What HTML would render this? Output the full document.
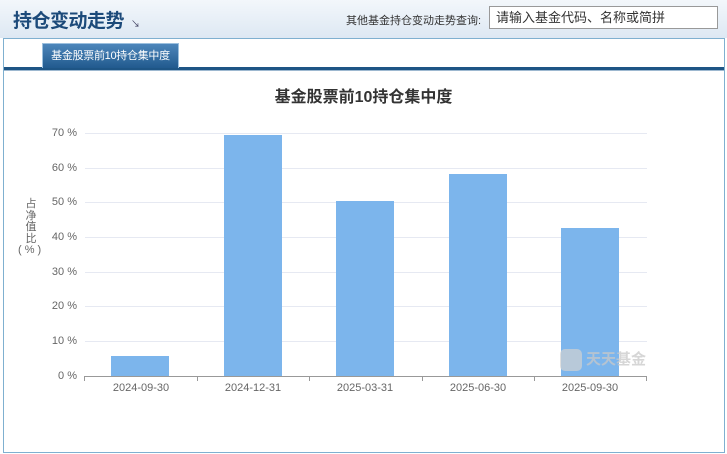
<!DOCTYPE html>
<html><head><meta charset="utf-8"><style>
body{margin:0;width:727px;height:454px;position:relative;background:#fff;font-family:"Liberation Sans","Noto Sans CJK SC",sans-serif;overflow:hidden}
.hdr{position:absolute;left:0;top:0;width:727px;height:38px;background:linear-gradient(#f3f7fb,#dde8f3)}
.t{position:absolute;left:13px;top:6px;font-size:19px;font-weight:bold;color:#1c4a7a;letter-spacing:-0.5px}
.ar{position:absolute;left:131px;top:17px;font-size:9px;color:#335}
.q{position:absolute;left:346px;top:12px;font-size:11px;color:#333}
.in{position:absolute;left:489px;top:6px;width:229px;height:23px;border:1px solid #999;background:#fff;box-sizing:border-box;font-size:13px;color:#333;padding:3px 6px;line-height:16px}
.panel{position:absolute;left:3px;top:38px;width:720px;height:413px;border:1px solid #7fb0d0;background:#fff}
.tab{position:absolute;left:42px;top:43px;width:137px;height:25px;background:linear-gradient(#4d86bb,#215a8e);border:1px solid #9cc0de;border-bottom:none;box-sizing:border-box;color:#fff;font-size:11px;line-height:24px;text-align:center;letter-spacing:-0.3px}
.line{position:absolute;left:4px;top:67px;width:720px;height:3px;background:#1e5585;border-bottom:1px solid #9db8d0}
.ttl{position:absolute;left:0;width:727px;top:83px;text-align:center;font-size:16px;font-weight:bold;color:#333}
.g{position:absolute;left:85px;width:562px;height:1px;background:#e6e9f2}
.yl{position:absolute;width:50px;left:27px;text-align:right;font-size:11px;color:#666}
.b{position:absolute;width:58px;background:#7cb5ec;bottom:78px}
.xl{position:absolute;top:382px;width:112px;text-align:center;font-size:11px;color:#666}
.tk{position:absolute;top:376px;width:1px;height:5px;background:#999}
</style></head><body>
<div class="hdr"></div>
<div class="t">持仓变动走势</div><div class="ar">↘</div>
<div class="q">其他基金持仓变动走势查询:</div>
<div class="in">请输入基金代码、名称或简拼</div>
<div class="panel"></div>
<div class="line"></div>
<div class="tab">基金股票前10持仓集中度</div>
<div class="ttl">基金股票前10持仓集中度</div>
<div class="g" style="top:133px"></div><div class="g" style="top:168px"></div><div class="g" style="top:202px"></div><div class="g" style="top:237px"></div><div class="g" style="top:272px"></div><div class="g" style="top:306px"></div><div class="g" style="top:341px"></div>
<div class="yl" style="top:127px">70 %</div><div class="yl" style="top:162px">60 %</div><div class="yl" style="top:196px">50 %</div><div class="yl" style="top:231px">40 %</div><div class="yl" style="top:266px">30 %</div><div class="yl" style="top:300px">20 %</div><div class="yl" style="top:335px">10 %</div><div class="yl" style="top:370px">0 %</div>
<div style="position:absolute;left:24px;top:199px;width:14px;font-size:11px;color:#666;line-height:11.5px;text-align:center">占净值比</div>
<div style="position:absolute;left:18px;top:244px;font-size:11px;color:#666">( % )</div>
<div class="b" style="left:111px;top:356px"></div>
<div class="b" style="left:224px;top:135px"></div>
<div class="b" style="left:336px;top:201px"></div>
<div class="b" style="left:449px;top:174px"></div>
<div class="b" style="left:561px;top:228px"></div>
<div style="position:absolute;left:560px;top:349px;width:22px;height:22px;border-radius:5px;background:rgba(210,210,210,.7)"></div>
<div style="position:absolute;left:586px;top:348px;font-size:15px;font-weight:bold;color:rgba(200,200,200,.75)">天天基金</div>
<div style="position:absolute;left:84px;top:376px;width:563px;height:1px;background:#999"></div>
<div class="tk" style="left:84px"></div><div class="tk" style="left:197px"></div><div class="tk" style="left:309px"></div><div class="tk" style="left:422px"></div><div class="tk" style="left:534px"></div><div class="tk" style="left:646px"></div>
<div class="xl" style="left:85px">2024-09-30</div><div class="xl" style="left:197px">2024-12-31</div><div class="xl" style="left:309px">2025-03-31</div><div class="xl" style="left:422px">2025-06-30</div><div class="xl" style="left:534px">2025-09-30</div>
</body></html>
